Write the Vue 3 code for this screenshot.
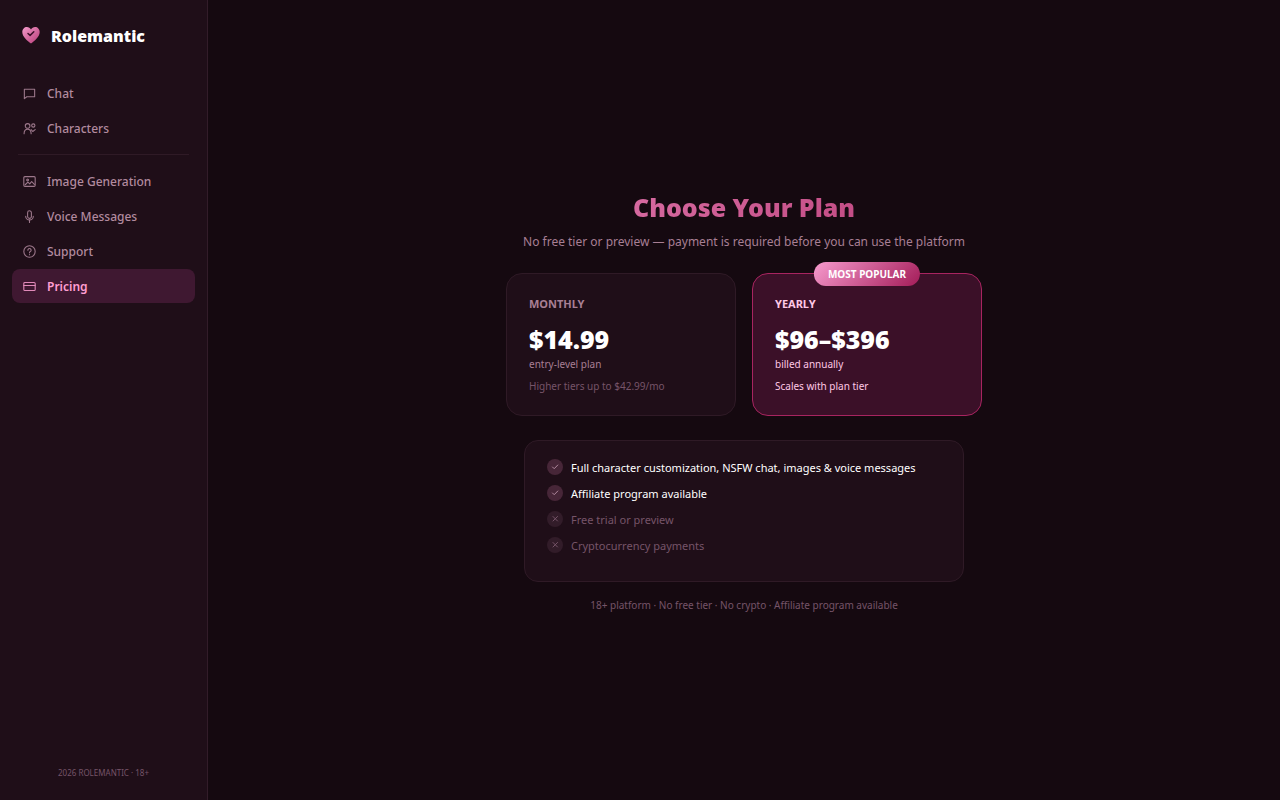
<template>
  <div class="app">
    <aside class="sidebar">
      <div class="brand">
        <svg class="logo" viewBox="0 0 20 20" aria-hidden="true">
          <defs>
            <linearGradient id="heart" x1="0" y1="0" x2="1" y2="1">
              <stop offset="0" stop-color="#f39bcb" />
              <stop offset="1" stop-color="#b83a76" />
            </linearGradient>
          </defs>
          <path d="M10 17.400C6.400 15 1.300 10.800 1.300 6 1.300 3.100 3.400 1 5.900 1 7.600 1 9.200 1.900 10 3.400 10.800 1.900 12.400 1 14.100 1 16.600 1 18.700 3.100 18.700 6 18.700 10.800 13.600 15 10 17.400Z" fill="url(#heart)" />
          <path d="M7 7.500 9.100 9.400 12.800 5.800" fill="none" stroke="#3d1029" stroke-width="1.500" stroke-linecap="round" stroke-linejoin="round" />
        </svg>
        <span class="brand-name">Rolemantic</span>
      </div>
      <nav class="nav">
        <template v-for="(group, i) in navGroups" :key="i">
          <hr v-if="i > 0" class="divider">
          <button
            v-for="item in group"
            :key="item.label"
            type="button"
            class="nav-item"
            :class="{ active: item.label === current }"
            @click="current = item.label"
          >
            <svg class="nav-icon" viewBox="0 0 24 24" aria-hidden="true">
              <path v-for="d in item.paths" :key="d" :d="d" />
            </svg>
            <span>{{ item.label }}</span>
          </button>
        </template>
      </nav>
      <div class="copyright">2026 ROLEMANTIC · 18+</div>
    </aside>

    <main class="main">
      <h1 class="title">Choose Your Plan</h1>
      <p class="subtitle">No free tier or preview — payment is required before you can use the platform</p>

      <div class="plans">
        <section v-for="plan in plans" :key="plan.name" class="plan" :class="{ popular: plan.popular }">
          <span v-if="plan.popular" class="badge">MOST POPULAR</span>
          <h2 class="plan-name">{{ plan.name }}</h2>
          <div class="plan-price">{{ plan.price }}</div>
          <div class="plan-period">{{ plan.period }}</div>
          <div class="plan-note">{{ plan.note }}</div>
        </section>
      </div>

      <ul class="features">
        <li v-for="feature in features" :key="feature.text" class="feature" :class="{ off: !feature.included }">
          <span class="mark">
            <svg viewBox="0 0 16 16" aria-hidden="true">
              <path :d="feature.included ? 'M5.500 8 7.200 9.700 10.800 6' : 'M6 5.500 10.500 10M10.500 5.500 6 10'" />
            </svg>
          </span>
          <span>{{ feature.text }}</span>
        </li>
      </ul>

      <p class="footnote">18+ platform · No free tier · No crypto · Affiliate program available</p>
    </main>
  </div>
</template>

<script setup>
import { ref } from 'vue'

const current = ref('Pricing')

const navGroups = [
  [
    { label: 'Chat', paths: ['M2.500 4h19v14H7l-4.500 3.500z'] },
    {
      label: 'Characters',
      paths: [
        'M8.500 3a4.300 4.300 0 1 0 0 8.600 4.300 4.300 0 0 0 0-8.600z',
        'M2 21.500c0-4.500 2.500-8 6.500-8s6.500 3.500 6.500 8',
        'M19 3.500a3 3 0 1 0 0 6 3 3 0 0 0 0-6z',
        'M15 14l3 3.500 4.500-3.500'
      ]
    }
  ],
  [
    {
      label: 'Image Generation',
      paths: [
        'M3.500 3h17a2 2 0 0 1 2 2v14a2 2 0 0 1-2 2h-17a2 2 0 0 1-2-2V5a2 2 0 0 1 2-2z',
        'M8.500 7.500a1.700 1.700 0 1 0 0 3.400 1.700 1.700 0 0 0 0-3.400z',
        'M4 18l5-5 3.500 3.500L16 12l5 5.500'
      ]
    },
    {
      label: 'Voice Messages',
      paths: [
        'M12 1.500A3.500 3.500 0 0 0 8.500 5v7a3.500 3.500 0 0 0 7 0V5A3.500 3.500 0 0 0 12 1.500z',
        'M5 11.500a7 7 0 0 0 14 0',
        'M12 18.500V23'
      ]
    },
    {
      label: 'Support',
      paths: [
        'M12 1.500a10.500 10.500 0 1 0 0 21 10.500 10.500 0 0 0 0-21z',
        'M9 9.500a3 3 0 1 1 4.500 2.600c-1 .6-1.500 1.200-1.500 2.400',
        'M12 17.500v.3'
      ]
    },
    {
      label: 'Pricing',
      paths: [
        'M3.500 4.500h17a2 2 0 0 1 2 2v11a2 2 0 0 1-2 2h-17a2 2 0 0 1-2-2v-11a2 2 0 0 1 2-2z',
        'M1.500 10h21'
      ]
    }
  ]
]

const plans = [
  { name: 'MONTHLY', price: '$14.99', period: 'entry-level plan', note: 'Higher tiers up to $42.99/mo' },
  { name: 'YEARLY', price: '$96–$396', period: 'billed annually', note: 'Scales with plan tier', popular: true }
]

const features = [
  { text: 'Full character customization, NSFW chat, images & voice messages', included: true },
  { text: 'Affiliate program available', included: true },
  { text: 'Free trial or preview', included: false },
  { text: 'Cryptocurrency payments', included: false }
]
</script>

<style>
body { background: #150910; }
</style>

<style scoped>
.app { display: flex; min-height: 100vh; color: #fff; font-family: "Noto Sans", "Open Sans", sans-serif; background: #150910; }
.app * { box-sizing: border-box; }

.sidebar { flex: 0 0 208px; box-sizing: border-box; display: flex; flex-direction: column; padding: 24px 12px 20px; background: #1f0e18; border-right: 1px solid #321c29; }
.brand { display: flex; align-items: center; gap: 10px; height: 24px; padding: 0 9px; }
.logo { width: 20px; height: 20px; }
.brand-name { font-size: 16px; font-weight: 900; }
.nav { display: flex; flex-direction: column; gap: 1px; margin-top: 28px; }
.nav-item { display: flex; align-items: center; gap: 11px; height: 34px; padding: 0 11px; border: none; border-radius: 8px; background: none; color: #b28a9f; font-family: inherit; font-size: 12px; font-weight: 500; text-align: left; cursor: pointer; }
.nav-item.active { background: #3f1831; color: #ff9ed2; font-weight: 600; }
.nav-icon { width: 13px; height: 13px; fill: none; stroke: currentColor; stroke-width: 2; stroke-linecap: round; stroke-linejoin: round; opacity: 0.85; }
.divider { width: calc(100% - 12px); height: 1px; margin: 8px 6px; border: none; background: #2f1a26; }
.copyright { margin-top: auto; color: #765468; font-size: 8px; line-height: 14px; text-align: center; }

.main { flex: 1; display: flex; flex-direction: column; align-items: center; justify-content: center; padding: 28px 24px 24px; }
.title { width: 100%; margin: 0; background: linear-gradient(135deg, #f79bce, #a31c58); -webkit-background-clip: text; background-clip: text; color: transparent; font-size: 25px; font-weight: 900; line-height: 32px; text-align: center; }
.subtitle { margin: 9px 0 21px; color: #a87f94; font-size: 12px; line-height: 20px; text-align: center; }

.plans { display: grid; grid-template-columns: 1fr 1fr; gap: 16px; width: 100%; max-width: 476px; }
.plan { position: relative; padding: 20px 22px 21px; border: 1px solid #2f1a26; border-radius: 16px; background: #1f0e18; }
.plan.popular { border-color: #a82460; background: #3b1028; }
.badge { position: absolute; top: -12px; left: 50%; transform: translateX(-50%); padding: 0 14px; border-radius: 12px; background: linear-gradient(135deg, #f79bce, #a31c58); font-size: 10px; font-weight: 700; line-height: 24px; white-space: nowrap; }
.plan-name { margin: 0; color: #a87f94; font-size: 11px; font-weight: 700; line-height: 20px; }
.plan-price { margin-top: 8px; font-size: 25px; font-weight: 900; line-height: 34px; }
.plan-period { color: #a87f94; font-size: 10px; line-height: 16px; }
.plan-note { margin-top: 6px; color: #765468; font-size: 10px; line-height: 16px; }
.popular .plan-name, .popular .plan-period, .popular .plan-note { color: #ffc8e6; }

.features { width: 100%; max-width: 440px; margin: 24px 0 0; padding: 18px 22px; border: 1px solid #2f1a26; border-radius: 14px; background: #1f0e18; list-style: none; }
.feature { display: flex; align-items: flex-start; gap: 8px; min-height: 26px; font-size: 11px; line-height: 18px; }
.feature.off { color: #765468; }
.mark { display: flex; flex: none; width: 16px; height: 16px; border-radius: 50%; background: #472638; color: #b28a9f; }
.off .mark { background: #321c29; color: #765468; }
.mark svg { width: 16px; height: 16px; fill: none; stroke: currentColor; stroke-width: 1; stroke-linecap: round; stroke-linejoin: round; }
.footnote { margin: 14px 0 0; color: #765468; font-size: 10px; line-height: 18px; text-align: center; }
</style>
